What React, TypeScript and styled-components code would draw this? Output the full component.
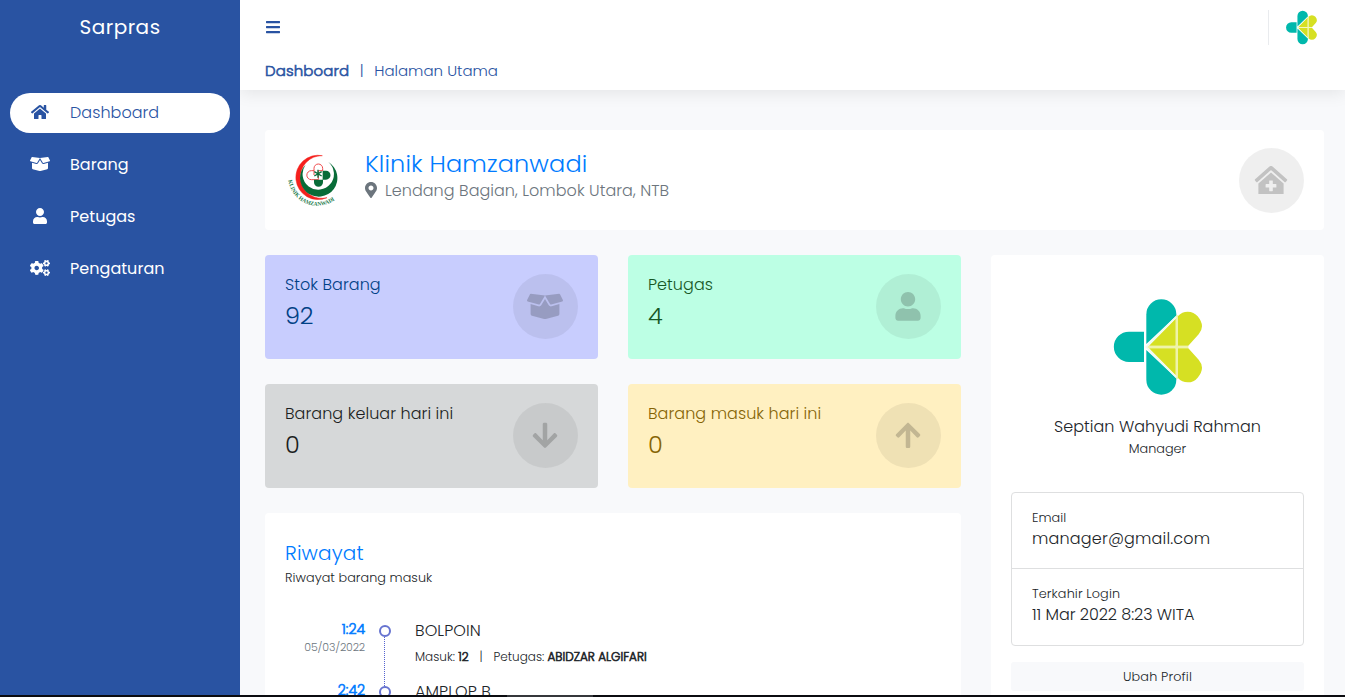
import React from "react";
import styled, { createGlobalStyle } from "styled-components";
import {
  FaArrowDown,
  FaArrowUp,
  FaBars,
  FaBoxOpen,
  FaClinicMedical,
  FaCogs,
  FaHome,
  FaMapMarkerAlt,
  FaUser,
} from "react-icons/fa";

const GlobalStyle = createGlobalStyle`
  *, *::before, *::after { box-sizing: border-box; }
  body {
    margin: 0;
    background: #f8f9fb;
    color: #212529;
    font-family: Poppins, Inter, "Liberation Sans", sans-serif;
    font-size: 16px;
    font-weight: 300;
  }
`;

const brand = "#2953a2";

/* Line of text; `track` is its letter spacing in px */
const Text = styled.div<{
  size?: number;
  line?: number;
  track?: number;
  weight?: number;
  color?: string;
}>`
  font-size: ${(p) => p.size ?? 16}px;
  line-height: ${(p) => p.line ?? 24}px;
  letter-spacing: ${(p) => p.track ?? 0.04}px;
  font-weight: ${(p) => p.weight ?? 300};
  color: ${(p) => p.color ?? "inherit"};
  white-space: nowrap;
`;

/* Emphasis that keeps the widths of the light face */
const Strong = styled(Text)`
  -webkit-text-stroke: 0.6px currentColor;
`;

const Screen = styled.div`
  height: 697px;
  display: flex;
  flex-direction: column;
  overflow: hidden;
`;

const Shell = styled.div`
  height: 695px;
  display: flex;
  overflow: hidden;
`;

const Taskbar = styled.div`
  height: 2px;
  flex: none;
  background: linear-gradient(to right, #0b0c10 507px, #35373b 507px, #35373b 593px, #0b0c10 593px);
`;

const Sidebar = styled.aside`
  position: relative;
  z-index: 1;
  width: 240px;
  flex: none;
  background: ${brand};
`;

const Brand = styled.div`
  height: 55px;
  padding-bottom: 2px;
  display: flex;
  align-items: center;
  justify-content: center;
  color: #fff;
`;

const Nav = styled.nav`
  display: flex;
  flex-direction: column;
  gap: 12px;
  padding: 38px 10px 0;
`;

const NavItem = styled.a<{ $active?: boolean }>`
  height: 40px;
  display: flex;
  align-items: center;
  padding: 0 20px;
  border-radius: 20px;
  background: ${(p) => (p.$active ? "#fff" : "transparent")};
  color: ${(p) => (p.$active ? brand : "#fff")};
`;

const NavIcon = styled.span`
  margin: 0 20px 2px 0;
  display: flex;
  font-size: 16px;
  svg { height: 1em; width: 1.25em; }
`;

const Main = styled.main`
  flex: 1;
  min-width: 0;
`;

const Header = styled.header`
  height: 90px;
  padding: 0 26px 0 25px;
  background: #fff;
  color: ${brand};
  box-shadow: 0 3px 16px rgba(0, 0, 0, 0.085);
`;

const TopRow = styled.div`
  height: 55px;
  display: flex;
  align-items: center;
  justify-content: space-between;
  svg { display: block; }
`;

const MenuButton = styled.span`
  padding-bottom: 2px;
`;

const UserMenu = styled.div`
  padding-left: 15px;
  border-left: 1px solid #e9ebee;
`;

const Breadcrumb = styled.div`
  display: flex;
  height: 31px;
`;

const Separator = styled(Text)`
  width: 25px;
  text-align: center;
`;

const Content = styled.div`
  padding: 40px 21px 0 25px;
`;

const Card = styled.section`
  background: #fff;
  border-radius: 4px;
`;

const ClinicCard = styled(Card)`
  height: 100px;
  display: flex;
  align-items: center;
  padding: 0 20px;
`;

const ClinicInfo = styled.div`
  flex: 1;
  height: 62px;
  margin-left: 20px;
`;

const Address = styled.div`
  display: flex;
  align-items: center;
  color: #6c757d;
  svg { width: 12px; height: 16px; margin: 0 8px 2px 0; }
`;

const Round = styled.div`
  width: 65px;
  height: 65px;
  flex: none;
  padding-right: 1px;
  border-radius: 50%;
  display: flex;
  align-items: center;
  justify-content: center;
  background: rgba(0, 0, 0, 0.063);
  color: rgba(0, 0, 0, 0.19);
  font-size: 28.8px;
  svg { height: 1em; width: 1.25em; }
`;

const Columns = styled.div`
  display: flex;
  align-items: flex-start;
  gap: 30px;
  margin-top: 25px;
`;

const LeftColumn = styled.div`
  width: 696px;
`;

const Stats = styled.div`
  display: grid;
  grid-template-columns: 333px 333px;
  gap: 25px 30px;
`;

const StatCard = styled.div<{ $bg: string; $fg: string }>`
  height: 104px;
  padding: 18px 20px 0;
  border-radius: 4px;
  display: flex;
  justify-content: space-between;
  background: ${(p) => p.$bg};
  color: ${(p) => p.$fg};
  ${Round} { margin-top: 1px; }
`;

const StatValue = styled(Text)`
  margin-top: 4px;
`;

const History = styled(Card)`
  margin-top: 25px;
  padding: 28px 20px 0;
`;

const Timeline = styled.div`
  padding-top: 28px;
`;

const Entry = styled.div`
  display: flex;
  height: 61px;
`;

const When = styled.div`
  width: 80px;
  text-align: right;
`;

const Rail = styled.div`
  width: 12px;
  margin: 6px 24px -6px 14px;
  display: flex;
  flex-direction: column;
  align-items: center;
`;

const Dot = styled.span`
  width: 12px;
  height: 12px;
  flex: none;
  border: 2px solid #6673d0;
  border-radius: 50%;
`;

const Dots = styled.span`
  flex: 1;
  margin-right: 1px;
  border-left: 1px dotted #5563d0;
`;

const Details = styled.div`
  display: flex;
  margin-top: 6px;
`;

const Profile = styled(Card)`
  width: 333px;
  height: 520px;
  padding: 42px 20px 0;
  text-align: center;
  > svg { display: block; margin: 0 auto 18px; }
`;

const InfoList = styled.div`
  margin-top: 33px;
  border: 1px solid #dedfe0;
  border-radius: 4px;
  text-align: left;
`;

const InfoItem = styled.div`
  height: 75px;
  padding: 15px 20px 0;
  & + & { border-top: 1px solid #dedfe0; height: 77px; }
`;

const EditButton = styled.button`
  display: block;
  width: 100%;
  height: 29px;
  margin-top: 16px;
  padding: 0;
  border: 0;
  border-radius: 3px;
  background: #f8f9fb;
  color: #212529;
  font: inherit;
`;

const Petals = ({ size }: { size: number }) => (
  <svg width={size} height={size} viewBox="84 51 300 300">
    <g fill="#00b8ac">
      <path d="M192 155V246H147A45.5 45.5 0 0 1 147 155Z" />
      <path d="M199 192V103A45 45 0 0 1 289 103V107Z" />
      <path d="M199 210V299A45 45 0 0 0 289 299V295Z" />
    </g>
    <g fill="#d6e023">
      <path d="M207 197L287 116V197Z" />
      <path d="M207 205L287 286V205Z" />
      <path d="M294 197V108Q306 95 323 95Q342 95 353 109Q366 125 366 139Q366 151 356 163L325 197Z" />
      <path d="M294 205V294Q306 307 323 307Q342 307 353 293Q366 277 366 263Q366 251 356 239L325 205Z" />
    </g>
    <path d="M291 106V296M200 201H325" stroke="#eff3a9" strokeWidth="6" fill="none" />
    <path d="M289 110L199 201L289 292" stroke="#eefaf0" strokeWidth="5" fill="none" />
  </svg>
);

const ClinicLogo = () => (
  <svg width="60" height="60" viewBox="74 88 180 180">
    <path d="M186 105A66.500 66.500 0 1 0 200 231A64 64 0 1 1 186 105Z" fill="#f5201d" stroke="#f5201d" strokeWidth="1.500" />
    <path d="M204 124A56 56 0 1 1 136 132A47 47 0 1 0 204 124Z" fill="#086c38" />
    <path
      d="M161 163V143A13 13 0 0 1 187 143V150H174V177H153A13.500 13.500 0 0 1 153 150H161"
      fill="#fff"
      stroke="#ee4a4c"
      strokeWidth="3"
    />
    <path d="M187 150H197A13.500 13.500 0 0 1 197 177H188V185A13.500 13.500 0 0 1 161 185V177H187Z" fill="#086c38" />
    <path d="M173 147V171M162 153L184 166M162 166L184 153" stroke="#086c38" strokeWidth="4" />
    <path id="clinic-arc" d="M84 179A88 88 0 0 0 240 222" fill="none" />
    <text fontFamily="Liberation Serif, serif" fontSize="17" fontWeight="700" fill="#17794a">
      <textPath href="#clinic-arc" textLength="182" lengthAdjust="spacingAndGlyphs">
        KLINIK HAMZANWADI
      </textPath>
    </text>
  </svg>
);

const navItems = [
  { label: "Dashboard", icon: <FaHome />, weight: 300, active: true },
  { label: "Barang", icon: <FaBoxOpen />, weight: 400 },
  { label: "Petugas", icon: <FaUser />, weight: 400 },
  { label: "Pengaturan", icon: <FaCogs />, weight: 400 },
];

const stats = [
  { label: "Stok Barang", value: "92", icon: <FaBoxOpen />, bg: "#c8cdfe", fg: "#004085" },
  { label: "Petugas", value: "4", icon: <FaUser />, bg: "#bcffe4", fg: "#155724" },
  { label: "Barang keluar hari ini", value: "0", icon: <FaArrowDown />, bg: "#d6d8d9", fg: "#1b1e21" },
  { label: "Barang masuk hari ini", value: "0", icon: <FaArrowUp />, bg: "#fff0c1", fg: "#856404" },
];

const entries: { time: string; item: string; date?: string; count?: string; officer?: string }[] = [
  { time: "1:24", date: "05/03/2022", item: "BOLPOIN", count: "12", officer: "ABIDZAR ALGIFARI" },
  { time: "2:42", item: "AMPLOP B" },
];

export default function App() {
  return (
    <Screen>
      <GlobalStyle />
      <Shell>
        <Sidebar>
          <Brand>
            <Text size={20} track={0.5} weight={400}>Sarpras</Text>
          </Brand>
          <Nav>
            {navItems.map((n) => (
              <NavItem key={n.label} $active={n.active}>
                <NavIcon>{n.icon}</NavIcon>
                <Text weight={n.weight}>{n.label}</Text>
              </NavItem>
            ))}
          </Nav>
        </Sidebar>
        <Main>
          <Header>
            <TopRow>
              <MenuButton>
                <FaBars size={16} />
              </MenuButton>
              <UserMenu>
                <Petals size={35} />
              </UserMenu>
            </TopRow>
            <Breadcrumb>
              <Strong size={15} line={31} track={0.1}>Dashboard</Strong>
              <Separator size={15} line={31}>|</Separator>
              <Text size={15} line={31} track={0}>Halaman Utama</Text>
            </Breadcrumb>
          </Header>
          <Content>
            <ClinicCard>
              <ClinicLogo />
              <ClinicInfo>
                <Text size={24} line={29} track={0.15} color="#007bff">Klinik Hamzanwadi</Text>
                <Address>
                  <FaMapMarkerAlt />
                  <Text line={25}>Lendang Bagian, Lombok Utara, NTB</Text>
                </Address>
              </ClinicInfo>
              <Round><FaClinicMedical /></Round>
            </ClinicCard>
            <Columns>
              <LeftColumn>
                <Stats>
                  {stats.map((s) => (
                    <StatCard key={s.label} $bg={s.bg} $fg={s.fg}>
                      <div>
                        <Text track={0.06}>{s.label}</Text>
                        <StatValue size={24} line={29} track={-0.3}>{s.value}</StatValue>
                      </div>
                      <Round>{s.icon}</Round>
                    </StatCard>
                  ))}
                </Stats>
                <History>
                  <Text size={20} track={0.15} color="#007bff">Riwayat</Text>
                  <Text size={12.8} line={26}>Riwayat barang masuk</Text>
                  <Timeline>
                    {entries.map((e) => (
                      <Entry key={e.time}>
                        <When>
                          <Strong size={14} line={20} track={0} color="#007bff">{e.time}</Strong>
                          {e.date && <Text size={11} line={16} track={-0.15} color="#6c757d">{e.date}</Text>}
                        </When>
                        <Rail>
                          <Dot />
                          <Dots />
                        </Rail>
                        <div>
                          <Text size={16} line={23} track={0.08}>{e.item}</Text>
                          {e.count && (
                            <Details>
                              <Text size={12} line={18} track={0}>Masuk:&nbsp;</Text>
                              <Strong size={12} line={18} track={0}>{e.count}</Strong>
                              <Separator size={12} line={18} track={0}>|</Separator>
                              <Text size={12} line={18} track={0}>Petugas:&nbsp;</Text>
                              <Strong size={12} line={18} track={0}>{e.officer}</Strong>
                            </Details>
                          )}
                        </div>
                      </Entry>
                    ))}
                  </Timeline>
                </History>
              </LeftColumn>
              <Profile>
                <Petals size={100} />
                <Text>Septian Wahyudi Rahman</Text>
                <Text size={12.8} line={20} track={0}>Manager</Text>
                <InfoList>
                  <InfoItem>
                    <Text size={12.8} line={20}>Email</Text>
                    <Text line={21} track={0.18}>manager@gmail.com</Text>
                  </InfoItem>
                  <InfoItem>
                    <Text size={12.8} line={20} track={0.12}>Terkahir Login</Text>
                    <Text line={21} track={-0.05}>11 Mar 2022 8:23 WITA</Text>
                  </InfoItem>
                </InfoList>
                <EditButton>
                  <Text size={12.8} line={29} track={0.15}>Ubah Profil</Text>
                </EditButton>
              </Profile>
            </Columns>
          </Content>
        </Main>
      </Shell>
      <Taskbar />
    </Screen>
  );
}
